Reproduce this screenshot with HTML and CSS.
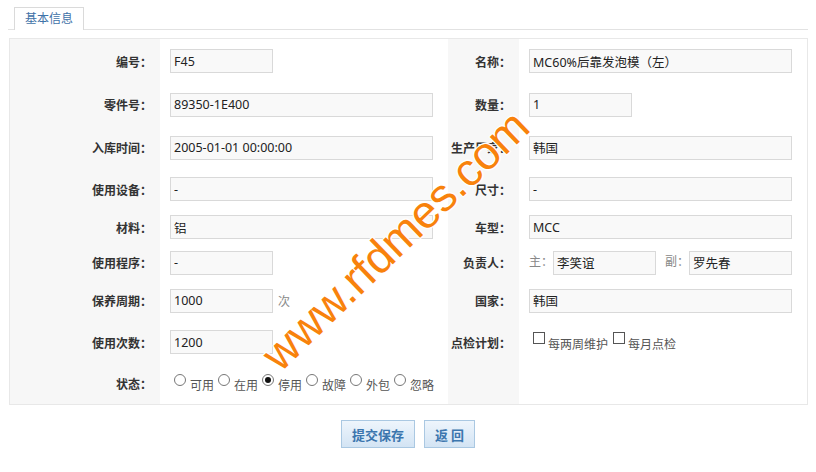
FILE: index.html
```html
<!DOCTYPE html>
<html lang="zh-CN">
<head>
    <meta charset="UTF-8">
    <title>模具信息</title>
    <link rel="stylesheet" href="styles.css">
</head>
<body>
    <div class="page">
        <!-- Tab header -->
        <div class="tab-bar">
            <span class="tab">基本信息</span>
        </div>

        <!-- Info form -->
        <div class="form-box">
            <table class="info-table">
                <colgroup>
                    <col class="col-label">
                    <col class="col-field">
                    <col class="col-label2">
                    <col class="col-field">
                </colgroup>
                <tr class="r1">
                    <td class="label">编号：</td>
                    <td class="field"><input class="txt short" type="text" value="F45" readonly></td>
                    <td class="label">名称：</td>
                    <td class="field"><input class="txt wide" type="text" value="MC60%后靠发泡模（左）" readonly></td>
                </tr>
                <tr class="r2">
                    <td class="label">零件号：</td>
                    <td class="field"><input class="txt wide" type="text" value="89350-1E400" readonly></td>
                    <td class="label">数量：</td>
                    <td class="field"><input class="txt short" type="text" value="1" readonly></td>
                </tr>
                <tr class="r3">
                    <td class="label">入库时间：</td>
                    <td class="field"><input class="txt wide" type="text" value="2005-01-01 00:00:00" readonly></td>
                    <td class="label">生产厂家：</td>
                    <td class="field"><input class="txt wide" type="text" value="韩国" readonly></td>
                </tr>
                <tr class="r4">
                    <td class="label">使用设备：</td>
                    <td class="field"><input class="txt wide" type="text" value="-" readonly></td>
                    <td class="label">尺寸：</td>
                    <td class="field"><input class="txt wide" type="text" value="-" readonly></td>
                </tr>
                <tr class="r5">
                    <td class="label">材料：</td>
                    <td class="field"><input class="txt wide" type="text" value="铝" readonly></td>
                    <td class="label">车型：</td>
                    <td class="field"><input class="txt wide" type="text" value="MCC" readonly></td>
                </tr>
                <tr class="r6">
                    <td class="label">使用程序：</td>
                    <td class="field"><input class="txt short" type="text" value="-" readonly></td>
                    <td class="label">负责人：</td>
                    <td class="field">
                        <span class="hint">主：</span><input class="txt short" type="text" value="李笑谊" readonly><span class="hint second">副：</span><input class="txt short" type="text" value="罗先春" readonly>
                    </td>
                </tr>
                <tr class="r7">
                    <td class="label">保养周期：</td>
                    <td class="field"><input class="txt short" type="text" value="1000" readonly><span class="unit">次</span></td>
                    <td class="label">国家：</td>
                    <td class="field"><input class="txt wide" type="text" value="韩国" readonly></td>
                </tr>
                <tr class="r8">
                    <td class="label">使用次数：</td>
                    <td class="field"><input class="txt short" type="text" value="1200" readonly></td>
                    <td class="label">点检计划：</td>
                    <td class="field">
                        <div class="opts checks">
                            <label class="opt"><input type="checkbox"><span>每两周维护</span></label>
                            <label class="opt"><input type="checkbox"><span>每月点检</span></label>
                        </div>
                    </td>
                </tr>
                <tr class="r9">
                    <td class="label">状态：</td>
                    <td class="field">
                        <div class="opts">
                            <label class="opt"><input type="radio" name="state"><span>可用</span></label>
                            <label class="opt"><input type="radio" name="state"><span>在用</span></label>
                            <label class="opt"><input type="radio" name="state" checked><span>停用</span></label>
                            <label class="opt"><input type="radio" name="state"><span>故障</span></label>
                            <label class="opt"><input type="radio" name="state"><span>外包</span></label>
                            <label class="opt"><input type="radio" name="state"><span>忽略</span></label>
                        </div>
                    </td>
                    <td class="blank"></td>
                    <td></td>
                </tr>
            </table>
        </div>

        <div class="btn-bar">
            <button class="btn">提交保存</button>
            <button class="btn">返 回</button>
        </div>

        <!-- Watermark -->
        <div class="watermark">www.rfdmes.com</div>
    </div>
</body>
</html>
```

FILE: styles.css
```css
* {
    margin: 0;
    padding: 0;
    box-sizing: border-box;
}

body {
    font-family: "Noto Sans", "Noto Sans CJK SC", sans-serif;
    font-size: 12px;
    color: #333;
    background-color: #fff;
}

.page {
    position: relative;
    width: 800px;
    margin: 0 8px;
    height: 472px;
    overflow: hidden;
}

/* Tab header */
.tab-bar {
    padding: 7px 0 0 6px;
    height: 30px;
    border-bottom: 1px solid #e2e2e2;
}

.tab {
    display: inline-block;
    height: 23px;
    padding: 0 10px;
    line-height: 22px;
    border: 1px solid #dadada;
    border-bottom: none;
    background-color: #fff;
    color: #3f72a8;
    font-size: 12px;
    margin-bottom: -1px;
    position: relative;
}

/* Form box */
.form-box {
    margin: 8px 0 0 1px;
    border: 1px solid #e8e8e8;
}

.info-table {
    width: 100%;
    border-collapse: collapse;
    table-layout: fixed;
}

.col-label { width: 150px; }
.col-field { width: 288px; }
.col-label2 { width: 71px; }

.info-table td {
    padding: 0;
    vertical-align: middle;
    white-space: nowrap;
}

.r1 { height: 44px; }
.r2 { height: 43px; }
.r3 { height: 43px; }
.r4 { height: 40px; }
.r5 { height: 36px; }
.r6 { height: 35px; }
.r7 { height: 41px; }
.r8 { height: 42px; }
.r9 { height: 41px; }

.label,
.blank {
    background-color: #f7f7f7;
    text-align: right;
    font-weight: bold;
    padding-right: 8px !important;
    font-family: "Noto Sans CJK JP", "Noto Sans CJK SC", sans-serif;
    font-size: 12px;
    color: #333;
    overflow: visible;
}

.field {
    padding-left: 10px !important;
}

.txt {
    height: 24px;
    border: 1px solid #d9d9d9;
    background-color: #f9f9f9;
    padding: 0 3px;
    font-family: "Noto Sans", "Noto Sans CJK SC", sans-serif;
    font-size: 12.5px;
    color: #222;
    vertical-align: middle;
    outline: none;
}

.txt.short { width: 103px; }
.txt.wide { width: 263px; }

.hint {
    color: #888;
    display: inline-block;
    width: 24px;
    vertical-align: middle;
    position: relative;
    top: -2px;
    font-family: "Noto Sans CJK JP", "Noto Sans CJK SC", sans-serif;
}

.hint.second {
    margin-left: 9px;
}

.unit {
    color: #888;
    margin-left: 5px;
    vertical-align: middle;
}

/* Radios and checkboxes */
.opts {
    display: flex;
    gap: 4px;
    padding-left: 4px;
}

.opt {
    display: flex;
    align-items: flex-start;
    color: #555;
}

.opt span {
    line-height: 14px;
    padding-top: 5px;
}

.opt input {
    appearance: none;
    -webkit-appearance: none;
    width: 12px;
    height: 12px;
    border: 1px solid #777;
    background-color: #fff;
    margin: 0 4px 0 0;
    flex: none;
}

.opt input[type="radio"] {
    border-radius: 50%;
    position: relative;
}

.opt input[type="radio"]:checked::after {
    content: "";
    position: absolute;
    left: 2px;
    top: 2px;
    width: 6px;
    height: 6px;
    border-radius: 50%;
    background-color: #111;
}

.checks {
    gap: 5px;
}

.checks .opt input {
    margin-right: 3px;
    border-color: #555;
}

.checks .opt span {
    padding-top: 6px;
}

/* Buttons */
.btn-bar {
    text-align: center;
    padding-top: 15px;
}

.btn {
    height: 28px;
    padding: 0 10px;
    margin: 0 3px;
    border: 1px solid #aac8e2;
    background: linear-gradient(#eef5fc, #d3e4f4);
    color: #3c76ae;
    font-family: "Noto Sans CJK SC", sans-serif;
    font-size: 13px;
    font-weight: bold;
    cursor: pointer;
}

/* Watermark overlay */
.watermark {
    position: absolute;
    left: 387px;
    top: 240px;
    transform: translate(-50%, -50%) rotate(-44deg);
    font-family: "Liberation Sans", sans-serif;
    font-size: 46px;
    color: #f8820c;
    white-space: nowrap;
    text-shadow: 0 0 2px #fff, 1px 1px 0 #fff, -1px -1px 0 #fff, 1px -1px 0 #fff, -1px 1px 0 #fff;
    pointer-events: none;
}
```
